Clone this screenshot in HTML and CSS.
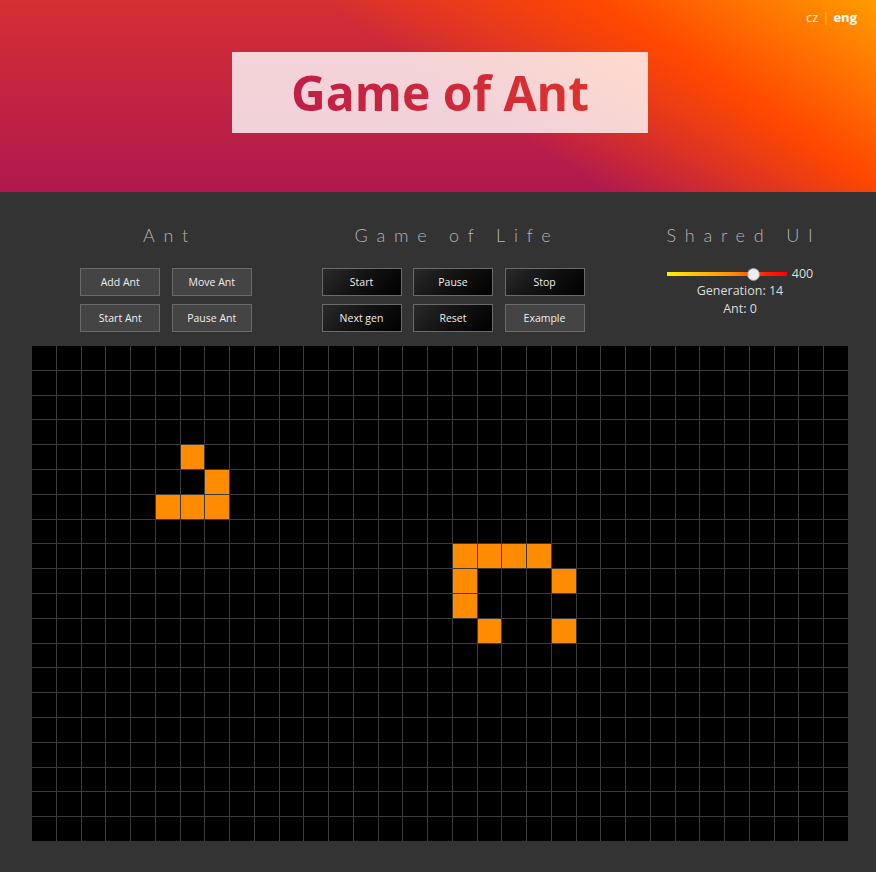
FILE: index.html
```html
<!DOCTYPE html>
<html lang="en">
<head>
<meta charset="utf-8">
<title>Game of Ant</title>
<link rel="stylesheet" href="styles.css">
</head>
<body>
<header class="header">
  <nav class="lang">
    <a class="lang-link" href="#">cz</a><span class="lang-sep">|</span><a class="lang-link lang-active" href="#">eng</a>
  </nav>
  <div class="title-box"><h1 class="title"><span class="title-text">Game of Ant</span></h1></div>
</header>
<main class="main">
  <section class="controls">
    <div class="panel">
      <h2 class="panel-title">Ant</h2>
      <div class="btn-grid btn-grid-2">
        <button class="btn btn-gray">Add Ant</button>
        <button class="btn btn-gray">Move Ant</button>
        <button class="btn btn-gray">Start Ant</button>
        <button class="btn btn-gray">Pause Ant</button>
      </div>
    </div>
    <div class="panel">
      <h2 class="panel-title">Game of Life</h2>
      <div class="btn-grid btn-grid-3">
        <button class="btn btn-dark">Start</button>
        <button class="btn btn-dark">Pause</button>
        <button class="btn btn-dark">Stop</button>
        <button class="btn btn-dark">Next gen</button>
        <button class="btn btn-dark">Reset</button>
        <button class="btn btn-gray">Example</button>
      </div>
    </div>
    <div class="panel">
      <h2 class="panel-title">Shared UI</h2>
      <div class="speed">
        <input class="slider" type="range" min="100" max="500" value="400">
        <span class="speed-value">400</span>
      </div>
      <div class="stat">Generation: 14</div>
      <div class="stat">Ant: 0</div>
    </div>
  </section>
  <div class="board" id="board"></div>
</main>
<script src="script.js"></script>
</body>
</html>
```

FILE: styles.css
```css
html, body {
  margin: 0;
  padding: 0;
}
body {
  background: #333333;
  font-family: "Open Sans", "Noto Sans", sans-serif;
  color: #dddddd;
  min-height: 872px;
}

/* Header */
.header {
  height: 192px;
  box-sizing: border-box;
  padding: 8px 19px 0 23px;
  background:
    linear-gradient(33deg, rgba(255, 72, 0, 0) 52%, rgba(255, 72, 0, 1) 76%, #ff9c00 100%),
    linear-gradient(to bottom, #d52e33 0%, #b0194f 100%);
}
.lang {
  text-align: right;
  font-size: 13px;
  line-height: 18px;
  height: 18px;
}
.lang-link {
  color: rgba(255, 255, 255, 0.9);
  text-decoration: none;
}
.lang-active {
  font-weight: 700;
  color: #ffffff;
}
.lang-sep {
  color: rgba(255, 255, 255, 0.55);
  margin: 0 4px;
  font-weight: 300;
}
.title-box {
  width: 416px;
  height: 81px;
  margin: 26px auto 0;
  background: rgba(255, 255, 255, 0.8);
  box-sizing: border-box;
  display: flex;
  align-items: center;
  justify-content: center;
}
.title {
  margin: 0;
  font-size: 48px;
  font-weight: 700;
  line-height: 60px;
}
.title-text {
  background: linear-gradient(90deg, #c01e46 0%, #d02a3a 60%, #dc3330 100%);
  -webkit-background-clip: text;
  background-clip: text;
  color: transparent;
}

/* Controls */
.main {
  padding: 31px 0 31px 0;
}
.controls {
  display: grid;
  grid-template-columns: repeat(3, 287px);
  justify-content: center;
  padding-left: 30px;
}
.panel {
  display: flex;
  flex-direction: column;
  align-items: center;
}
.panel-title {
  margin: 0 0 21px 0;
  font-family: "Lato", "Roboto", sans-serif;
  font-weight: 300;
  font-size: 18px;
  line-height: 24px;
  letter-spacing: 8.8px;
  color: #b4b4b4;
  padding-left: 8px;
}
.btn-grid {
  display: grid;
  gap: 8px 11.5px;
}
.btn-grid-2 {
  grid-template-columns: repeat(2, 80px);
}
.btn-grid-3 {
  grid-template-columns: repeat(3, 80px);
}
.btn {
  width: 80px;
  height: 28px;
  box-sizing: border-box;
  border: 1px solid #6a6a6a;
  font-family: "Open Sans", "Noto Sans", sans-serif;
  font-size: 10.5px;
  color: #eeeeee;
  padding: 0;
  cursor: pointer;
}
.btn-gray {
  background: #444444;
}
.btn-dark {
  background: linear-gradient(135deg, #2a2a2a 0%, #111111 50%, #000000 100%);
}

.speed {
  display: flex;
  align-items: center;
  gap: 5px;
  height: 14px;
  margin-top: -1px;
}
.slider {
  -webkit-appearance: none;
  appearance: none;
  width: 120px;
  height: 14px;
  margin: 0;
  padding: 0;
  background: transparent;
}
.slider::-webkit-slider-runnable-track {
  height: 4px;
  background: linear-gradient(90deg, #ffee00 0%, #ff8c00 55%, #ff1a00 85%, #ff0000 100%);
  border: none;
}
.slider::-webkit-slider-thumb {
  -webkit-appearance: none;
  appearance: none;
  width: 13px;
  height: 13px;
  border-radius: 50%;
  background: #ededed;
  border: 1px solid #9a9a9a;
  box-sizing: border-box;
  margin-top: -4.5px;
}
.speed-value {
  font-size: 12.5px;
  line-height: 14px;
  color: #dddddd;
}
.stat {
  font-size: 12.5px;
  line-height: 18px;
  color: #dddddd;
}
.speed + .stat {
  margin-top: 1px;
}

/* Board */
.board {
  margin: 14px 0 0 32px;
  width: 816px;
  height: 495px;
  display: grid;
  grid-template-columns: repeat(33, 1fr);
  grid-template-rows: repeat(20, 1fr);
  gap: 1px;
  background: #3c3c3c;
}
.cell {
  background: #000000;
}
.cell-alive {
  background: #ff8c00;
}
```

FILE: script.js
```js
(function () {
  var board = document.getElementById('board');
  var cols = 33, rows = 20;
  var alive = {
    '4,6': 1, '5,7': 1, '6,5': 1, '6,6': 1, '6,7': 1,
    '8,17': 1, '8,18': 1, '8,19': 1, '8,20': 1,
    '9,17': 1, '9,21': 1,
    '10,17': 1,
    '11,18': 1, '11,21': 1
  };
  var frag = document.createDocumentFragment();
  for (var r = 0; r < rows; r++) {
    for (var c = 0; c < cols; c++) {
      var d = document.createElement('div');
      d.className = alive[r + ',' + c] ? 'cell cell-alive' : 'cell';
      frag.appendChild(d);
    }
  }
  board.appendChild(frag);
})();
```
